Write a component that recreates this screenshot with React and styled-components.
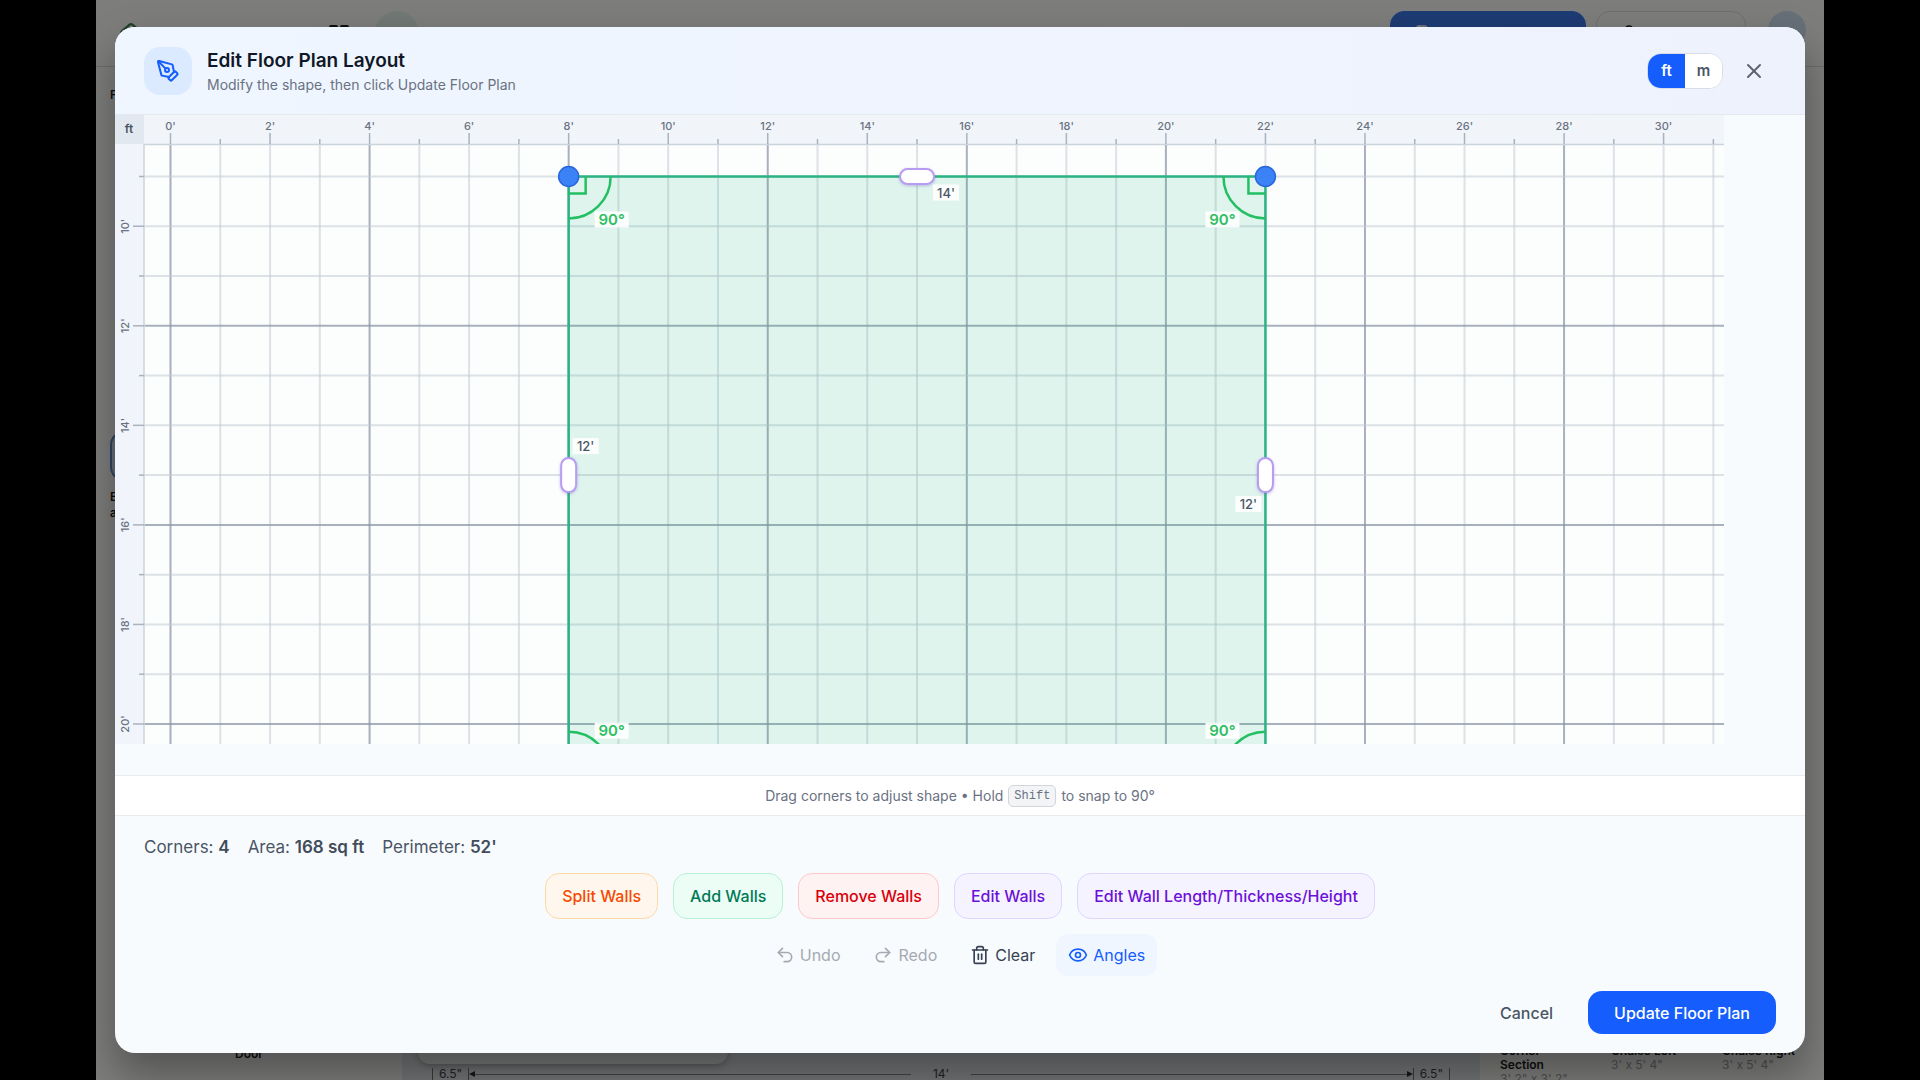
import React, { useState } from "react";
import styled, { createGlobalStyle, css } from "styled-components";
import { PenTool, X, Undo2, Redo2, Trash2, Eye, LayoutGrid, House, Save, UserRound } from "lucide-react";

const GlobalStyle = createGlobalStyle`
  *, *::before, *::after { box-sizing: border-box; }
  body { margin: 0; background: #000; font-family: Inter, "Liberation Sans", sans-serif; overflow: hidden; }
  button { font-family: inherit; cursor: pointer; }
`;

/* ---------- page behind the dialog ---------- */

const Stage = styled.div`
  height: 100vh;
  padding: 0 5%;
  background: #000;
`;

const Page = styled.div`
  position: relative;
  height: 100%;
  overflow: hidden;
  display: flex;
  flex-direction: column;
  background: #fafaf8;
  color: #1c1c1c;
`;

const TopBar = styled.header`
  flex: none;
  height: 67px;
  padding: 0 18px 0 22px;
  display: flex;
  align-items: flex-start;
  border-bottom: 1px solid #d8d8d6;
`;

const Brand = styled.div`
  display: flex;
  align-items: center;
  gap: 20px;
  padding-top: 22px;
  font-size: 18px;
  line-height: 24px;
  font-weight: 600;
`;

const LogoMark = styled(House)`
  color: #3c7a52;
`;

const StatusDot = styled.span`
  width: 44px;
  height: 44px;
  margin: 11px 0 0 24px;
  border-radius: 50%;
  background: #e2f1ea;
`;

const TopActions = styled.div`
  margin-left: auto;
  display: flex;
  gap: 10px;
  padding-top: 11px;
`;

const TopButton = styled.button`
  height: 44px;
  width: ${(p) => (p.$primary ? 196 : 150)}px;
  border-radius: 14px;
  border: 1px solid ${(p) => (p.$primary ? "#3b78e8" : "#dededc")};
  background: ${(p) => (p.$primary ? "#3b78e8" : "#fafaf8")};
  color: ${(p) => (p.$primary ? "#fff" : "#1c1c1c")};
  padding: 0 24px;
  text-align: left;
`;

const Avatar = styled.span`
  width: 38px;
  height: 38px;
  margin-left: 12px;
  border-radius: 50%;
  background: #cfe0f0;
`;

const Workspace = styled.div`
  flex: 1;
  min-height: 0;
  display: grid;
  grid-template-columns: 306px 1fr 344px;
`;

const SidePanel = styled.aside`
  padding: 20px 14px 0;
  font-size: 12px;
  line-height: 16px;
  font-weight: 600;
  display: flex;
  flex-direction: column;
`;

const PanelTile = styled.div`
  height: 50px;
  margin: 328px 0 8px;
  border: 2px solid #5d86c4;
  border-radius: 14px;
  background: #cddcf2;
`;

const DoorLabel = styled.span`
  margin-top: auto;
  align-self: center;
  padding-bottom: 18px;
`;

const Drawing = styled.div`
  display: flex;
  flex-direction: column;
  justify-content: flex-end;
  background: #e4e8ec;
`;

const FloatingBar = styled.div`
  width: 310px;
  height: 60px;
  margin: 0 0 4px 16px;
  border-radius: 12px;
  background: #f0f2f2;
  box-shadow: 0 2px 6px rgba(0, 0, 0, 0.25);
`;

const Dimension = styled.div`
  display: flex;
  align-items: center;
  margin: 0 30px;
  font-size: 12px;
  line-height: 12px;
  color: #444;
`;

const DimensionEnd = styled.span`
  padding: 0 6px;
  border: solid #777;
  border-width: 0 1px;
`;

const DimensionLine = styled.span`
  flex: 1;
  height: 1px;
  background: #888;
`;

const DimensionValue = styled.span`
  padding: 0 22px;
`;

const ArrowHead = styled.span`
  border: 3px solid transparent;
  border-${(p) => p.$toward}: 0;
  border-${(p) => (p.$toward === "left" ? "right" : "left")}: 6px solid #333;
`;

const Catalog = styled.aside`
  display: grid;
  grid-template-columns: repeat(3, 111px);
  align-items: end;
  padding: 0 0 0 20px;
  font-size: 12px;
  line-height: 14px;
`;

const CatalogItem = styled.div`
  display: flex;
  flex-direction: column;
  height: 36px;
  b { font-weight: 600; }
  span { color: #a0a0a0; }
`;

/* ---------- dialog ---------- */

const Overlay = styled.div`
  position: absolute;
  inset: 0;
  padding: 27px 19px;
  display: flex;
  background: rgba(0, 0, 0, 0.5);
`;

const Dialog = styled.section`
  flex: 1;
  min-width: 0;
  display: flex;
  flex-direction: column;
  overflow: hidden;
  border-radius: 20px;
  background: #f8fbfd;
  box-shadow: 0 20px 40px rgba(0, 0, 0, 0.35);
`;

const DialogHeader = styled.header`
  flex: none;
  height: 88px;
  padding: 0 29px;
  display: flex;
  align-items: center;
  gap: 15px;
  background: linear-gradient(90deg, #eff6ff, #eef2fd);
  border-bottom: 1px solid #e5eaf0;
`;

const IconTile = styled.span`
  width: 48px;
  height: 48px;
  display: grid;
  place-items: center;
  border-radius: 16px;
  background: #dbeafe;
  color: #155dfc;
`;

const Heading = styled.div`
  flex: 1;
  padding-top: 2px;
`;

const Title = styled.h2`
  margin: 0;
  font-size: 19px;
  line-height: 26px;
  font-weight: 600;
  color: #101828;
`;

const Subtitle = styled.p`
  margin: 0;
  font-size: 14px;
  line-height: 22px;
  color: #6a7282;
`;

const HeaderControls = styled.div`
  display: flex;
  align-items: center;
  gap: 9px;
`;

const UnitSwitch = styled.div`
  display: flex;
  height: 36px;
  overflow: hidden;
  border: 1px solid #d9dde3;
  border-radius: 14px;
  background: #fff;
`;

const UnitButton = styled.button`
  width: 37px;
  padding: 0;
  border: 0;
  font-size: 15px;
  font-weight: 600;
  background: ${(p) => (p.$on ? "#155dfc" : "#fff")};
  color: ${(p) => (p.$on ? "#fff" : "#4a5565")};
`;

const CloseButton = styled.button`
  width: 44px;
  height: 44px;
  padding: 0;
  display: grid;
  place-items: center;
  border: 0;
  background: none;
  color: #5a6472;
`;

const CanvasArea = styled.div`
  flex: 1;
  min-height: 0;
  padding: 0 81px 31px 0;
  display: flex;
`;

const Canvas = styled.svg`
  flex: 1;
  min-width: 0;
  height: 100%;
  display: block;
  background: #fcfefe;
  font-family: Inter, "Liberation Sans", sans-serif;
`;

const Hint = styled.p`
  flex: none;
  height: 41px;
  margin: 0;
  display: flex;
  align-items: center;
  justify-content: center;
  gap: 5px;
  font-size: 14px;
  line-height: 20px;
  color: #6a7282;
  background: #fff;
  border-top: 1px solid #e9edf0;
  border-bottom: 1px solid #e9edea;
`;

const Key = styled.kbd`
  padding: 0 5px;
  border: 1px solid #d1d5dc;
  border-radius: 5px;
  background: #f3f4f6;
  font-family: "Liberation Mono", monospace;
  font-size: 12px;
  line-height: 20px;
`;

const Footer = styled.footer`
  flex: none;
  padding: 19px 29px;
  display: flex;
  flex-direction: column;
`;

const Stats = styled.div`
  display: flex;
  gap: 18px;
  margin-bottom: 14px;
  font-size: 17px;
  line-height: 24px;
  color: #4a5565;
  b { font-weight: 600; color: #414b59; }
`;

const ButtonRow = styled.div`
  display: flex;
  justify-content: ${(p) => (p.$end ? "flex-end" : "center")};
  gap: ${(p) => p.$gap}px;
  margin-bottom: ${(p) => p.$below || 0}px;
`;

const tones = {
  orange: ["#f54900", "#fff7ed", "#ffd9a8"],
  green: ["#007a55", "#ecfdf5", "#b5f2d6"],
  red: ["#d9000b", "#fef2f2", "#ffc9c9"],
  violet: ["#6d11d8", "#f5f3ff", "#ddd6fe"],
};

const WallButton = styled.button`
  height: 46px;
  padding: 0 16px;
  border-radius: 14px;
  font-size: 16px;
  font-weight: 500;
  ${({ $tone }) => css`
    color: ${tones[$tone][0]};
    background: ${tones[$tone][1]};
    border: 1px solid ${tones[$tone][2]};
  `}
`;

const ToolButton = styled.button`
  height: 42px;
  padding: 0 12px;
  display: flex;
  align-items: center;
  gap: 5px;
  border: 0;
  border-radius: 12px;
  font-size: 16px;
  background: ${(p) => (p.$on ? "#eff6ff" : "transparent")};
  color: ${(p) => (p.$on ? "#155dfc" : "#364153")};
  &:disabled { color: #a5aab2; cursor: default; }
`;

const ActionButton = styled.button`
  height: 43px;
  padding: 0 26px;
  border: 0;
  border-radius: 14px;
  font-size: 16px;
  font-weight: 500;
  background: ${(p) => (p.$primary ? "#155dfc" : "transparent")};
  color: ${(p) => (p.$primary ? "#fff" : "#4a5565")};
`;

/* ---------- floor plan ---------- */

const FOOT = 49.77;
const RULER = 29;
const fx = (ft) => 55.5 + ft * FOOT;
const fy = (ft) => 61.5 + (ft - 9) * FOOT;
const range = (from, to) => Array.from({ length: to - from + 1 }, (_, i) => from + i);

function Grid() {
  const line = (n) => (n % 4 === 0 ? { stroke: "#8b95a5", strokeWidth: 2, strokeOpacity: 0.75 } : { stroke: "#c3cad4", strokeWidth: 2, strokeOpacity: 0.55 });
  return (
    <g>
      {range(0, 31).map((n) => <line key={"x" + n} x1={fx(n)} x2={fx(n)} y1={RULER} y2="1000" {...line(n)} />)}
      {range(9, 20).map((n) => <line key={"y" + n} y1={fy(n)} y2={fy(n)} x1={RULER} x2="3000" {...line(n)} />)}
    </g>
  );
}

function Rulers({ unit }) {
  const tick = { stroke: "#aab2be", strokeWidth: 1.5 };
  const label = { fontSize: 11, fontWeight: 500, fill: "#6a7282", textAnchor: "middle" };
  return (
    <g>
      <rect width="100%" height={RULER} fill="#f1f5f9" />
      <rect width={RULER} height="100%" fill="#f1f5fb" />
      <path d={`M${RULER} ${RULER + 0.5}H3000M${RULER} ${RULER}V1000`} stroke="#cbd3dd" strokeWidth="1.5" fill="none" />
      {range(0, 31).map((n) => <line key={n} x1={fx(n)} x2={fx(n)} y1={n % 2 ? 24 : 18} y2={RULER} {...tick} />)}
      {range(0, 15).map((n) => <text key={n} x={fx(n * 2)} y="15" {...label}>{n * 2}'</text>)}
      {range(9, 20).map((n) => <line key={n} y1={fy(n)} y2={fy(n)} x1={n % 2 ? 24 : 18} x2={RULER} {...tick} />)}
      {range(5, 10).map((n) => (
        <text key={n} transform={`translate(14 ${fy(n * 2)}) rotate(-90)`} {...label}>{n * 2}'</text>
      ))}
      <rect width={RULER} height={RULER} fill="#e2e8f0" />
      <text x="14" y="18" fontSize="12" fontWeight="600" fill="#4a5565" textAnchor="middle">{unit}</text>
    </g>
  );
}

function Tag({ x, y, w, children, angle }) {
  return (
    <g>
      <rect x={x - w / 2} y={y - 8} width={w} height="16" fill="#fff" fillOpacity="0.9" />
      <text x={x} y={y + 5} textAnchor="middle" fontSize={angle ? 15 : 13} fontWeight={angle ? 600 : 500} fill={angle ? "#2fbf62" : "#4a5565"}>{children}</text>
    </g>
  );
}

function Corner({ x, y, sx, sy, angles }) {
  return (
    <g>
      {angles && (
        <>
          <path transform={`translate(${x} ${y}) scale(${sx} ${sy})`} d="M0 42A42 42 0 0 0 42 0M0 17H17V0" fill="none" stroke="#22c063" strokeWidth="2.5" />
          <Tag x={x + sx * 43} y={y + sy * 43} w={34} angle>90°</Tag>
        </>
      )}
      <circle cx={x} cy={y} r="10" fill="#3b82f6" stroke="#2a66dc" strokeWidth="1.5" />
    </g>
  );
}

function Handle({ x, y, vertical }) {
  const w = vertical ? 15 : 34;
  const h = vertical ? 34 : 15;
  return <rect x={x - w / 2} y={y - h / 2} width={w} height={h} rx="7.5" fill="#fff" stroke="#b79cf2" strokeWidth="2" filter="url(#soft)" />;
}

function FloorPlan({ unit, angles }) {
  const [l, r, t, b] = [fx(8), fx(22), fy(9), fy(21)];
  return (
    <Canvas role="img" aria-label="Floor plan, 14 by 12 feet">
      <defs>
        <filter id="soft" x="-50%" y="-50%" width="200%" height="200%">
          <feDropShadow dx="0" dy="1" stdDeviation="1.5" floodColor="#6b4bb8" floodOpacity="0.35" />
        </filter>
      </defs>
      <Grid />
      <rect x={l} y={t} width={r - l} height={b - t} fill="#10b077" fillOpacity="0.125" stroke="#2bb483" strokeWidth="2.5" />
      <Rulers unit={unit} />
      <Corner x={l} y={t} sx={1} sy={1} angles={angles} />
      <Corner x={r} y={t} sx={-1} sy={1} angles={angles} />
      <Corner x={l} y={b} sx={1} sy={-1} angles={angles} />
      <Corner x={r} y={b} sx={-1} sy={-1} angles={angles} />
      <Handle x={(l + r) / 2} y={t} />
      <Handle x={l} y={(t + b) / 2} vertical />
      <Handle x={r} y={(t + b) / 2} vertical />
      <Tag x={(l + r) / 2 + 29} y={t + 16} w={26}>14'</Tag>
      <Tag x={l + 17} y={(t + b) / 2 - 29} w={26}>12'</Tag>
      <Tag x={r - 17} y={(t + b) / 2 + 29} w={26}>12'</Tag>
    </Canvas>
  );
}

function Backdrop() {
  return (
    <>
      <TopBar>
        <Brand>
          <LogoMark size={26} />
          Room Sketch 3D
          <LayoutGrid size={24} />
        </Brand>
        <StatusDot />
        <TopActions>
          <TopButton $primary><Save size={16} /></TopButton>
          <TopButton><UserRound size={16} /></TopButton>
          <Avatar />
        </TopActions>
      </TopBar>
      <Workspace>
        <SidePanel>
          Floor
          <PanelTile />
          Edit<br />an item
          <DoorLabel>Door</DoorLabel>
        </SidePanel>
        <Drawing>
          <FloatingBar />
          <Dimension>
            <DimensionEnd>6.5"</DimensionEnd>
            <ArrowHead $toward="left" />
            <DimensionLine />
            <DimensionValue>14'</DimensionValue>
            <DimensionLine />
            <ArrowHead $toward="right" />
            <DimensionEnd>6.5"</DimensionEnd>
          </Dimension>
        </Drawing>
        <Catalog>
          <CatalogItem><b>Corner</b><b>Section</b><span>3' 2" x 3' 2"</span></CatalogItem>
          <CatalogItem><b>Chaise Left</b><span>3' x 5' 4"</span></CatalogItem>
          <CatalogItem><b>Chaise Right</b><span>3' x 5' 4"</span></CatalogItem>
        </Catalog>
      </Workspace>
    </>
  );
}

export default function App() {
  const [unit, setUnit] = useState("ft");
  const [angles, setAngles] = useState(true);
  return (
    <Stage>
      <GlobalStyle />
      <Page>
        <Backdrop />
        <Overlay>
          <Dialog role="dialog" aria-labelledby="dialog-title">
            <DialogHeader>
              <IconTile><PenTool size={24} /></IconTile>
              <Heading>
                <Title id="dialog-title">Edit Floor Plan Layout</Title>
                <Subtitle>Modify the shape, then click Update Floor Plan</Subtitle>
              </Heading>
              <HeaderControls>
                <UnitSwitch>
                  <UnitButton $on={unit === "ft"} onClick={() => setUnit("ft")}>ft</UnitButton>
                  <UnitButton $on={unit === "m"} onClick={() => setUnit("m")}>m</UnitButton>
                </UnitSwitch>
                <CloseButton aria-label="Close"><X size={24} /></CloseButton>
              </HeaderControls>
            </DialogHeader>
            <CanvasArea>
              <FloorPlan unit={unit} angles={angles} />
            </CanvasArea>
            <Hint>
              Drag corners to adjust shape • Hold <Key>Shift</Key> to snap to 90°
            </Hint>
            <Footer>
              <Stats>
                <span>Corners: <b>4</b></span>
                <span>Area: <b>168 sq ft</b></span>
                <span>Perimeter: <b>52'</b></span>
              </Stats>
              <ButtonRow $gap={15} $below={15}>
                <WallButton $tone="orange">Split Walls</WallButton>
                <WallButton $tone="green">Add Walls</WallButton>
                <WallButton $tone="red">Remove Walls</WallButton>
                <WallButton $tone="violet">Edit Walls</WallButton>
                <WallButton $tone="violet">Edit Wall Length/Thickness/Height</WallButton>
              </ButtonRow>
              <ButtonRow $gap={9} $below={15}>
                <ToolButton disabled><Undo2 size={20} />Undo</ToolButton>
                <ToolButton disabled><Redo2 size={20} />Redo</ToolButton>
                <ToolButton><Trash2 size={20} />Clear</ToolButton>
                <ToolButton $on={angles} onClick={() => setAngles(!angles)}><Eye size={20} />Angles</ToolButton>
              </ButtonRow>
              <ButtonRow $end $gap={9}>
                <ActionButton>Cancel</ActionButton>
                <ActionButton $primary>Update Floor Plan</ActionButton>
              </ButtonRow>
            </Footer>
          </Dialog>
        </Overlay>
      </Page>
    </Stage>
  );
}
